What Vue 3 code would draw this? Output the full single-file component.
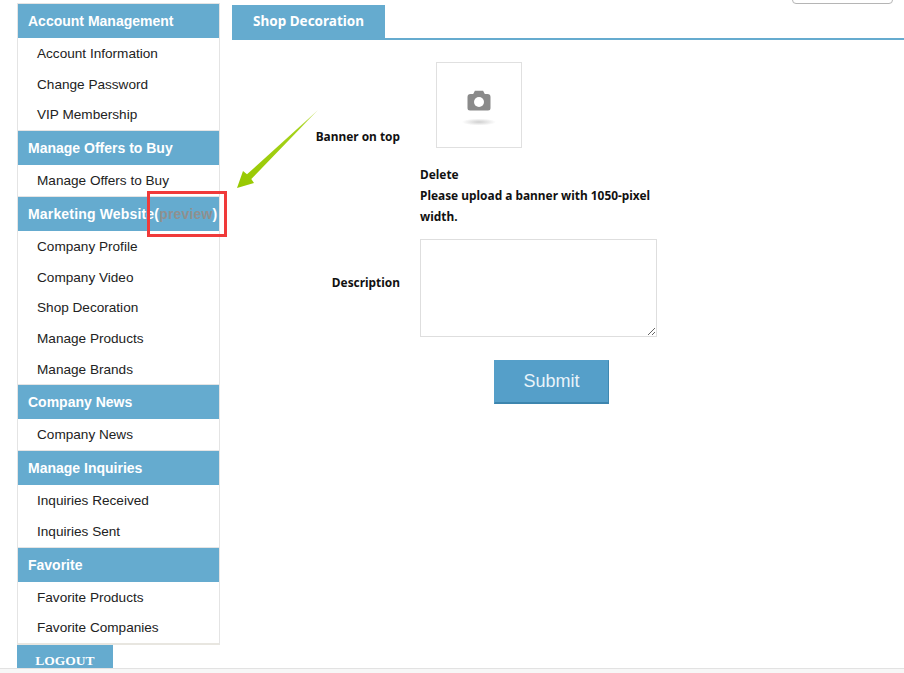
<script setup>
const groups = [
  { title: 'Account Management', items: ['Account Information', 'Change Password', 'VIP Membership'] },
  { title: 'Manage Offers to Buy', items: ['Manage Offers to Buy'] },
  { title: 'Marketing Website', preview: true, items: ['Company Profile', 'Company Video', 'Shop Decoration', 'Manage Products', 'Manage Brands'] },
  { title: 'Company News', items: ['Company News'] },
  { title: 'Manage Inquiries', items: ['Inquiries Received', 'Inquiries Sent'] },
  { title: 'Favorite', items: ['Favorite Products', 'Favorite Companies'] },
]
</script>

<template>
  <div class="page">
    <div class="corner-control"></div>
    <div class="columns">
      <aside class="side">
        <nav class="menu">
          <section v-for="g in groups" :key="g.title" class="group">
            <h3 class="head" :class="{ spaced: g.preview }">{{ g.title }}<template v-if="g.preview">(<span class="preview">preview</span>)</template></h3>
            <a v-for="item in g.items" :key="item" class="item">{{ item }}</a>
          </section>
        </nav>
        <div class="logout">LOGOUT</div>
      </aside>
      <main class="main">
        <div class="tabs"><div class="tab">Shop Decoration</div></div>
        <form class="form" @submit.prevent>
          <div class="row banner-row">
            <label class="label">Banner on top</label>
            <div class="photo">
              <svg width="40" height="48" viewBox="0 0 40 48">
                <defs>
                  <radialGradient id="shade">
                    <stop offset="0" stop-color="#cfcfcf" />
                    <stop offset="1" stop-color="#ffffff" />
                  </radialGradient>
                </defs>
                <path class="cam" d="M11.500 13h2.700l1.700-3.200h8.200l1.700 3.200h2.700a3 3 0 0 1 3 3v11a2.500 2.500 0 0 1-2.500 2.500h-18a2.500 2.500 0 0 1-2.500-2.500V16a3 3 0 0 1 3-3z" fill="#8a8a8a" />
                <circle cx="20" cy="21" r="5" fill="#fff" />
                <ellipse cx="20" cy="41" rx="17" ry="3.500" fill="url(#shade)" />
              </svg>
            </div>
          </div>
          <div class="row note-row">
            <span></span>
            <div class="note">
              <div>Delete</div>
              <div>Please upload a banner with 1050-pixel width.</div>
            </div>
          </div>
          <div class="row desc-row">
            <label class="label desc-label">Description</label>
            <textarea class="area"></textarea>
          </div>
          <div class="row submit-row">
            <span></span>
            <div class="submit-wrap"><button class="submit" type="submit">Submit</button></div>
          </div>
        </form>
      </main>
    </div>
    <div class="strip"></div>

    <svg class="arrow" width="90" height="90" viewBox="0 0 90 90">
      <defs>
        <linearGradient id="arrowFill" x1="1" y1="0" x2="0" y2="1">
          <stop offset="0" stop-color="#d0e67c" />
          <stop offset="0.25" stop-color="#a5d21a" />
          <stop offset="1" stop-color="#97c800" />
        </linearGradient>
      </defs>
      <polygon points="1,79 7,62 11,65.300 82,1 15.300,70 18,74" fill="url(#arrowFill)" />
    </svg>
    <div class="highlight"></div>
  </div>
</template>

<style>
html, body { margin: 0; background: #fff; }
</style>

<style scoped>
.page {
  position: relative;
  width: 904px;
  height: 673px;
  overflow: hidden;
  background: #fff;
  display: flex;
  flex-direction: column;
}
.corner-control {
  position: absolute;
  top: -10px;
  left: 792px;
  width: 99px;
  height: 12px;
  border: 1px solid #b5b5b5;
  border-radius: 4px;
}
.columns {
  display: flex;
  padding: 3px 0 0 17px;
  height: 668px;
  flex: none;
  box-sizing: border-box;
}
.side { width: 203px; flex: none; }
.menu {
  border: 1px solid #e4e4e4;
  border-bottom: 2px solid #e8e6e0;
  height: 642px;
  box-sizing: border-box;
  width: 203px;
}
.head {
  margin: 0;
  height: 34px;
  background: #65abcf;
  color: #fff;
  font: bold 14px/34px "Liberation Sans", Arial, sans-serif;
  padding-left: 10px;
  white-space: nowrap;
}
.spaced { letter-spacing: 0.17px; }
.group + .group { border-top: 1px solid #e4e4e4; }
.preview { color: #909090; }
.item {
  display: block;
  height: 30.72px;
  padding-left: 19px;
  color: #222;
  font: 13.6px/31.5px "Liberation Sans", Arial, sans-serif;
}
.logout {
  width: 96px;
  height: 23px;
  background: #65abcf;
  color: #fff;
  font: bold 13.5px/31px "Liberation Serif", "Times New Roman", serif;
  text-align: center;
  overflow: hidden;
}
.main { flex: 1; margin-left: 12px; padding-top: 2px; min-width: 0; }
.tabs { border-bottom: 2px solid #65abcf; height: 33px; }
.tab {
  width: 153px;
  height: 35px;
  background: #65abcf;
  color: #fff;
  font: bold 13.5px/33px "Noto Sans", sans-serif;
  text-align: center;
}
.form { padding-top: 22px; font: bold 11.9px "Noto Sans", sans-serif; color: #111; }
.row { display: grid; grid-template-columns: 168px 1fr; column-gap: 20px; }
.label { text-align: right; }
.banner-row { align-items: end; }
.banner-row .label { line-height: 21px; padding-bottom: 1px; }
.photo {
  width: 86px;
  height: 86px;
  margin-left: 16px;
  border: 1px solid #e0e0e0;
  box-sizing: border-box;
  display: flex;
  align-items: center;
  justify-content: center;
}
.cam { filter: blur(0.35px); }
.note-row { margin-top: 16px; }
.note { width: 240px; line-height: 21px; }
.desc-row { margin-top: 12px; align-items: center; }
.desc-label { padding-bottom: 12px; }
.area {
  display: block;
  width: 237px;
  height: 98px;
  margin: 0;
  padding: 0;
  box-sizing: border-box;
  border: 1.5px solid #dedede;
  background: #fff;
  resize: both;
  outline: none;
}
.submit-row { margin-top: 23px; }
.submit-wrap { padding-left: 74px; }
.submit {
  display: block;
  width: 115px;
  height: 44px;
  background: #559fc9;
  color: #e9f4fa;
  border: 1px solid #559fc9;
  border-bottom: 2px solid #3d85ae;
  border-right: 1px solid #3f88b1;
  font: 18px "Liberation Sans", Arial, sans-serif;
  padding: 0;
}
.strip {
  flex: 1;
  background: #f7f7f7;
  border-top: 1px solid #e2e2e2;
}
.arrow { position: absolute; left: 236px; top: 109px; }
.highlight {
  position: absolute;
  left: 147px;
  top: 191px;
  width: 80px;
  height: 46px;
  box-sizing: border-box;
  border: 3px solid #f03a3a;
}
</style>
